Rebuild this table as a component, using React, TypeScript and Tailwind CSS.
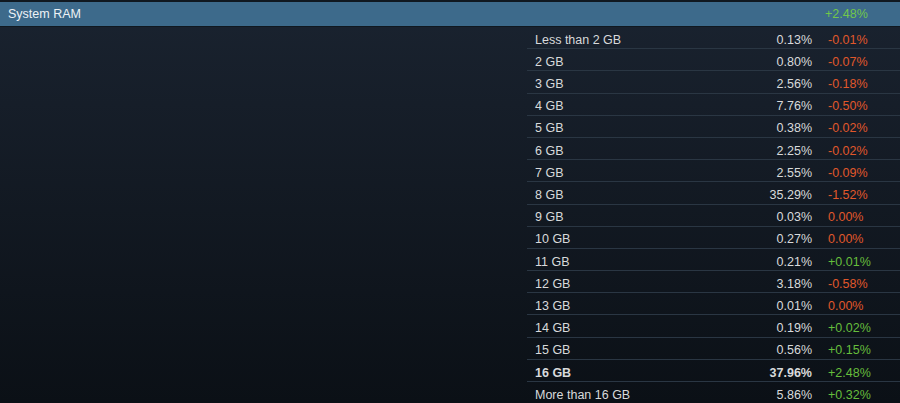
const ROWS = [
  { label: "Less than 2 GB", pct: "0.13%", change: "-0.01%" },
  { label: "2 GB", pct: "0.80%", change: "-0.07%" },
  { label: "3 GB", pct: "2.56%", change: "-0.18%" },
  { label: "4 GB", pct: "7.76%", change: "-0.50%" },
  { label: "5 GB", pct: "0.38%", change: "-0.02%" },
  { label: "6 GB", pct: "2.25%", change: "-0.02%" },
  { label: "7 GB", pct: "2.55%", change: "-0.09%" },
  { label: "8 GB", pct: "35.29%", change: "-1.52%" },
  { label: "9 GB", pct: "0.03%", change: "0.00%" },
  { label: "10 GB", pct: "0.27%", change: "0.00%" },
  { label: "11 GB", pct: "0.21%", change: "+0.01%" },
  { label: "12 GB", pct: "3.18%", change: "-0.58%" },
  { label: "13 GB", pct: "0.01%", change: "0.00%" },
  { label: "14 GB", pct: "0.19%", change: "+0.02%" },
  { label: "15 GB", pct: "0.56%", change: "+0.15%" },
  { label: "16 GB", pct: "37.96%", change: "+2.48%", bold: true },
  { label: "More than 16 GB", pct: "5.86%", change: "+0.32%" },
];

function ChangeCell({ value }: { value: string }) {
  const up = value.startsWith("+");
  return (
    <span className={up ? "text-[#66bd3c]" : "text-[#e0582b]"}>{value}</span>
  );
}

export default function App() {
  return (
    <div
      className="flex h-[403px] w-[900px] flex-col overflow-hidden bg-gradient-to-b from-[#1a2330] to-[#0b1016] text-[12.5px] text-[#d8dadb]"
      style={{ fontFamily: '"Liberation Sans", Arial, sans-serif' }}
    >
      <div className="flex h-[27px] shrink-0 items-center border-t-2 border-b border-[#101820] bg-[#3d6a8b] pt-px text-[#edf2f6]">
        <span className="flex-1 pl-2">System RAM</span>
        <span className="w-[75px] text-[#72c74a]">+2.48%</span>
      </div>
      <div className="ml-[527px] flex flex-col">
        {ROWS.map((row) => (
          <div
            key={row.label}
            className={`flex h-[22.2px] shrink-0 items-center border-b border-[#2a3643] pt-[5px] ${row.bold ? "font-bold" : ""}`}
          >
            <span className="flex-1 pl-2">{row.label}</span>
            <span className="w-[80px] text-right">{row.pct}</span>
            <span className="w-[88px] pl-[16px] font-normal">
              <ChangeCell value={row.change} />
            </span>
          </div>
        ))}
      </div>
    </div>
  );
}
